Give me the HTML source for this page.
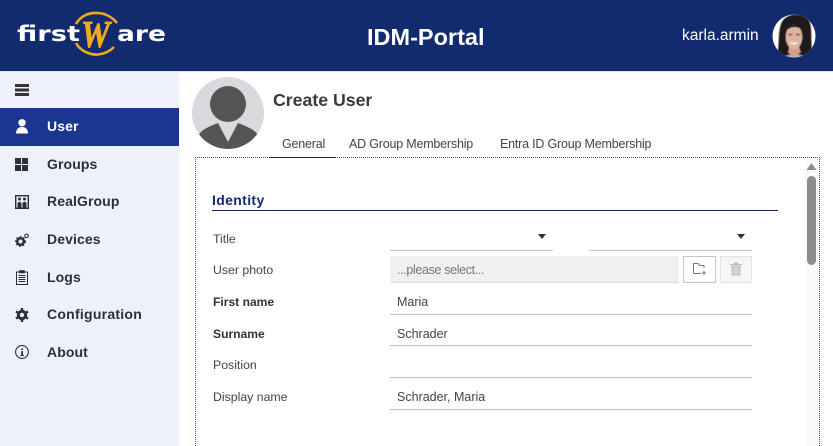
<!DOCTYPE html>
<html><head><meta charset="utf-8">
<style>
html,body{margin:0;padding:0;width:833px;height:446px;overflow:hidden;background:#fff;font-family:"Liberation Sans",sans-serif;color:#333}
#root{position:relative;width:833px;height:446px;overflow:hidden}
.a{position:absolute;white-space:nowrap;line-height:16px}
.nav{left:47px;font-size:14px;font-weight:700;color:#2e2e38;letter-spacing:.1px}
.lb{left:213px;font-size:12.3px;color:#444}
.lbb{font-weight:700;color:#333;font-size:12.1px}
.v{left:397px;font-size:12.5px;color:#444}
.ln{position:absolute;height:1px;background:#c4c4c4}
.tab{font-size:12.5px;color:#444;top:136px;letter-spacing:-.2px}
svg{position:absolute;overflow:hidden}
</style></head><body><div id="root">
<div class="a" style="left:0;top:0;width:833px;height:71px;background:#122a6e"></div>
<div class="a" style="left:0;top:71px;width:833px;height:1px;background:#e4e4e8"></div>
<div class="a" style="left:0;top:72px;width:179px;height:374px;background:#eef1fb"></div>
<div class="a" style="left:0;top:108px;width:179px;height:38px;background:#1b3690"></div>

<!-- logo -->
<svg style="left:0;top:0;filter:blur(.35px)" width="200" height="71">
<path d="M76 24 C81 15 90 12.500 98 13 C106 13.500 112 17 117 23" fill="none" stroke="#f2aa1c" stroke-width="2.600"/>
<path d="M76 43 C80 50 88 55 98 54.500 C104 54 110 51 114 47" fill="none" stroke="#f2aa1c" stroke-width="2.600"/>
<text x="17" y="41" font-family="DejaVu Sans" font-weight="700" font-size="21" fill="#fff" textLength="63" lengthAdjust="spacingAndGlyphs">first</text>
<text x="117" y="41" font-family="DejaVu Sans" font-weight="700" font-size="21" fill="#fff" textLength="49" lengthAdjust="spacingAndGlyphs">are</text>
<text x="81" y="47" font-family="Liberation Serif" font-style="italic" font-weight="700" font-size="38" fill="#f2aa1c" stroke="#f2aa1c" stroke-width=".8" textLength="29" lengthAdjust="spacingAndGlyphs">W</text>
</svg>

<div class="a" style="left:367px;top:24px;font-size:23.500px;line-height:26px;font-weight:700;color:#fff">IDM-Portal</div>
<div class="a" style="left:682px;top:27px;font-size:15.500px;color:#fff;line-height:18px">karla.armin</div>

<!-- user photo -->
<svg style="left:772px;top:14px" width="44" height="44" viewBox="0 0 44 44">
<defs><clipPath id="c"><circle cx="22" cy="22" r="21.500"/></clipPath></defs>
<g clip-path="url(#c)">
<rect width="44" height="44" fill="#fff"/>
<g style="filter:blur(.6px)">
<path d="M5 44 C8 30 5 12 12 5 C19 -1 29 -1 36 5 C42 13 37 32 42 44Z" fill="#1f1a19"/>
<path d="M10 44 C14 39 30 39 36 44Z" fill="#b9b2ad"/>
<path d="M17 32 L16 39 C20 42 26 42 29 38 L27 32Z" fill="#d0a08c"/>
<ellipse cx="22" cy="23" rx="8.500" ry="12.500" fill="#dcb3a0"/>
<path d="M13 17 C16 9 28 8 31 17 C28 12 20 11 13 17Z" fill="#1f1a19"/>
<path d="M17 28 Q22 33 27 28 Q22 29.500 17 28Z" fill="#fff"/>
<rect x="16.500" y="20" width="4" height="1.200" fill="#6a4a40"/><rect x="24" y="20" width="4" height="1.200" fill="#6a4a40"/>
</g></g></svg>

<!-- nav icons -->
<svg style="left:15px;top:84px" width="14" height="12"><rect width="14" height="3" y="0" fill="#333"/><rect width="14" height="3" y="4.500" fill="#333"/><rect width="14" height="3" y="9" fill="#333"/></svg>
<svg style="left:15px;top:119px" width="14" height="15"><circle cx="7" cy="3.800" r="3.700" fill="#fff"/><path d="M1 14.500 C1 10 3.500 8 7 8 C10.500 8 13 10 13 14.500Z" fill="#fff"/></svg>
<svg style="left:15px;top:158px" width="13" height="13" fill="#2e2e38"><rect width="6" height="6"/><rect x="7" width="6" height="6"/><rect y="7" width="6" height="6"/><rect x="7" y="7" width="6" height="6"/></svg>
<svg style="left:15px;top:195px" width="14" height="14"><rect x=".7" y=".7" width="12.600" height="12.600" fill="none" stroke="#2e2e38" stroke-width="1.400"/><circle cx="4.500" cy="4" r="1.500" fill="#2e2e38"/><circle cx="9.500" cy="4" r="1.500" fill="#2e2e38"/><path d="M2.500 13 V8 Q4.500 5.500 6.500 8 V13Z M7.500 13 V8 Q9.500 5.500 11.500 8 V13Z" fill="#2e2e38"/></svg>
<svg style="left:15px;top:233px" width="14" height="14"><circle cx="5.500" cy="8.500" r="3.300" fill="none" stroke="#2e2e38" stroke-width="2.500"/><circle cx="5.500" cy="8.500" r="4.800" fill="none" stroke="#2e2e38" stroke-width="1.200" stroke-dasharray="1.800 1.800"/><circle cx="11.500" cy="2.800" r="1.800" fill="none" stroke="#2e2e38" stroke-width="1.100"/></svg>
<svg style="left:16px;top:270px" width="12" height="15" fill="none" stroke="#2e2e38"><rect x=".5" y="2" width="11" height="12.500" stroke-width="1"/><rect x="3.500" y="0.500" width="5" height="2.500" fill="#2e2e38" stroke-width=".6"/><path d="M2.500 5.500H9.500M2.500 7.500H9.500M2.500 9.500H9.500M2.500 11.500H9.500" stroke-width="1"/></svg>
<svg style="left:15px;top:308px" width="14" height="14"><circle cx="7" cy="7" r="3.700" fill="none" stroke="#2e2e38" stroke-width="3"/><path d="M7 0V14M1 3.500L13 10.500M1 10.500L13 3.500" stroke="#2e2e38" stroke-width="2.400"/><circle cx="7" cy="7" r="2.200" fill="#eef1fb"/></svg>
<svg style="left:15px;top:345px" width="14" height="14"><circle cx="7" cy="7" r="6.400" fill="none" stroke="#2e2e38" stroke-width="1.100"/><rect x="6.200" y="6" width="1.700" height="4.500" fill="#2e2e38"/><rect x="6.200" y="3.500" width="1.700" height="1.500" fill="#2e2e38"/><rect x="5.200" y="10" width="3.700" height="1" fill="#2e2e38"/></svg>

<div class="a nav" style="top:118px;color:#fff">User</div>
<div class="a nav" style="top:156px">Groups</div>
<div class="a nav" style="top:193px">RealGroup</div>
<div class="a nav" style="top:231px">Devices</div>
<div class="a nav" style="top:269px">Logs</div>
<div class="a nav" style="top:306px;letter-spacing:.25px">Configuration</div>
<div class="a nav" style="top:344px">About</div>

<!-- avatar -->
<svg style="left:192px;top:77px" width="72" height="72" viewBox="0 0 72 72">
<defs><clipPath id="d"><circle cx="36" cy="36" r="36"/></clipPath></defs>
<circle cx="36" cy="36" r="36" fill="#d9d9de"/>
<g clip-path="url(#d)" fill="#555"><circle cx="36" cy="27" r="18"/>
<path d="M6 72 V60 C8 53 16 50 26 46 L36 65 L46 46 C56 50 64 53 67 60 V72Z"/></g></svg>

<div class="a" style="left:273px;top:90px;font-size:17.700px;line-height:20px;font-weight:700;color:#3a3a3a">Create User</div>
<div class="a tab" style="left:282px">General</div>
<div class="a tab" style="left:349px">AD Group Membership</div>
<div class="a tab" style="left:500px">Entra ID Group Membership</div>

<!-- panel -->
<div class="a" style="left:195px;top:157px;width:625px;height:289px;border:1px dotted #555;border-bottom:none;box-sizing:border-box"></div>
<div class="a" style="left:269px;top:157px;width:67px;height:1px;background:#122a6e"></div>
<div class="a" style="left:805px;top:158px;width:14px;height:288px;background:#f9f9f9"></div>
<div class="a" style="left:807px;top:176px;width:9px;height:89px;background:#8c8c8c;border-radius:5px"></div>
<svg style="left:806px;top:163px" width="11" height="7"><path d="M5.500 0L10.500 7H.5Z" fill="#8c8c8c"/></svg>

<div class="a" style="left:212px;top:192px;font-size:14px;letter-spacing:.35px;font-weight:700;color:#122a6e">Identity</div>
<div class="a" style="left:212px;top:210px;width:566px;height:1px;background:#122a6e"></div>

<div class="a lb" style="top:231px">Title</div>
<div class="a lb" style="top:262px">User photo</div>
<div class="a lb lbb" style="top:294px">First name</div>
<div class="a lb lbb" style="top:326px">Surname</div>
<div class="a lb" style="top:357px">Position</div>
<div class="a lb" style="top:389px">Display name</div>

<div class="ln" style="left:390px;top:250px;width:163px"></div>
<div class="ln" style="left:589px;top:250px;width:163px"></div>
<svg style="left:538px;top:234px" width="8" height="5"><path d="M0 0H8L4 5Z" fill="#333"/></svg>
<svg style="left:737px;top:234px" width="8" height="5"><path d="M0 0H8L4 5Z" fill="#333"/></svg>

<div class="a" style="left:390px;top:256px;width:289px;height:27px;background:#f0f0f0;border-bottom:1px solid #ddd;box-sizing:border-box"></div>
<div class="a" style="left:397px;top:262px;font-size:12.500px;letter-spacing:-.35px;color:#777">...please select...</div>
<div class="a" style="left:683px;top:256px;width:33px;height:27px;border:1px solid #c4c4c4;box-sizing:border-box;background:#fff"></div>
<svg style="left:693px;top:263px" width="14" height="13" fill="none" stroke="#777" stroke-width="1"><path d="M.5 10.500V.5H5L6.500 2.500H11V5M.5 10.500H8"/><path d="M11 8V12M9 10H13"/></svg>
<div class="a" style="left:720px;top:256px;width:32px;height:27px;border:1px solid #e2e2e2;box-sizing:border-box;background:#f5f5f5"></div>
<svg style="left:730px;top:262px" width="12" height="14"><path d="M0 2H12V3.500H0Z M4 .5H8V2H4Z" fill="#bbb"/><path d="M1.500 4H10.500V13.500H1.500Z" fill="#c4c4c4"/><path d="M4 5.500V12M6 5.500V12M8 5.500V12" stroke="#eee" stroke-width=".8"/></svg>

<div class="a v" style="top:294px">Maria</div>
<div class="ln" style="left:390px;top:314px;width:362px"></div>
<div class="a v" style="top:326px">Schrader</div>
<div class="ln" style="left:390px;top:345px;width:362px"></div>
<div class="ln" style="left:390px;top:377px;width:362px"></div>
<div class="a v" style="top:389px">Schrader, Maria</div>
<div class="ln" style="left:390px;top:409px;width:362px"></div>
</div></body></html>
